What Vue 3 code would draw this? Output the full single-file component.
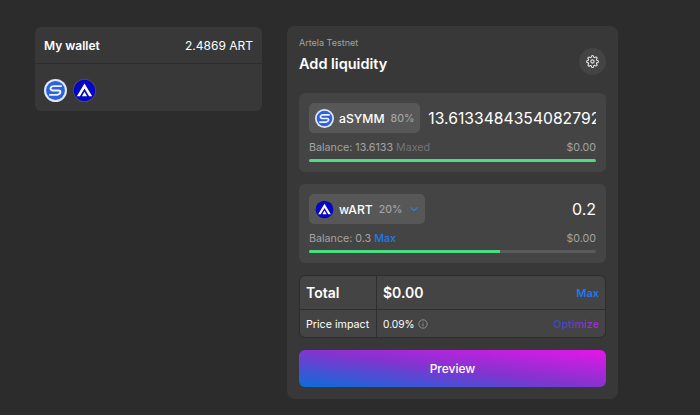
<template>
  <div class="page">
    <div class="wallet">
      <div class="wallet-head">
        <span class="wallet-title">My wallet</span>
        <span class="wallet-amount">2.4869 ART</span>
      </div>
      <div class="wallet-tokens">
        <svg class="logo-big" viewBox="0 0 24 24"><use href="#symm-logo" /></svg>
        <svg class="logo-big" viewBox="0 0 24 24"><use href="#art-logo" /></svg>
      </div>
    </div>

    <div class="card">
      <!-- logos used several times -->
      <svg width="0" height="0" class="defs">
        <defs>
          <g id="symm-logo">
            <circle cx="12" cy="12" r="12" fill="#dfe8fb" />
            <circle cx="12" cy="12" r="9.8" fill="#2c62dc" />
            <path d="M18.6 7.4H10.4Q7.6 7.4 6.9 9.2T8.8 12H15.2Q17.4 12 17.1 14T13.6 16.6H5.4" fill="none" stroke="#eef3fd" stroke-width="2" />
          </g>
          <g id="art-logo">
            <circle cx="12" cy="12" r="12" fill="#55554f" />
            <circle cx="12" cy="12" r="11.2" fill="#0505c4" />
            <path d="M12 4.6L20 18H16.8L12 10L7.2 18H4Z" fill="#fff" />
            <path d="M12 13.4L14.7 18H9.3Z" fill="#fff" />
          </g>
        </defs>
      </svg>

      <div class="card-head">
        <div>
          <div class="network">Artela Testnet</div>
          <div class="title">Add liquidity</div>
        </div>
        <button class="gear">
          <svg width="13" height="13" viewBox="0 0 24 24" fill="none" stroke="#e5e5e5" stroke-width="2" stroke-linecap="round" stroke-linejoin="round">
            <circle cx="12" cy="12" r="3" />
            <path d="M19.4 15a1.65 1.65 0 0 0 .33 1.82l.06.06a2 2 0 1 1-2.83 2.83l-.06-.06a1.65 1.65 0 0 0-2.82 1.17V21a2 2 0 1 1-4 0v-.09a1.65 1.65 0 0 0-2.82-1.12l-.06.06a2 2 0 1 1-2.83-2.83l.06-.06a1.65 1.65 0 0 0-1.17-2.82H3a2 2 0 1 1 0-4h.09a1.65 1.65 0 0 0 1.12-2.82l-.06-.06a2 2 0 1 1 2.83-2.83l.06.06a1.65 1.65 0 0 0 1.82.33H9a1.65 1.65 0 0 0 1-1.51V3a2 2 0 1 1 4 0v.09a1.65 1.65 0 0 0 2.82 1.12l.06-.06a2 2 0 1 1 2.83 2.83l-.06.06a1.65 1.65 0 0 0-.33 1.82V9a1.65 1.65 0 0 0 1.51 1H21a2 2 0 1 1 0 4h-.09a1.65 1.65 0 0 0-1.51 1z" />
          </svg>
        </button>
      </div>

      <div v-for="t in tokens" :key="t.name" class="token-box">
        <div class="token-row">
          <div class="pill">
            <svg class="logo-small" viewBox="0 0 24 24"><use :href="t.logo" /></svg>
            <span class="pill-name">{{ t.name }}</span>
            <span class="pill-pct">{{ t.pct }}</span>
            <svg v-if="t.select" class="chev" width="10" height="10" viewBox="0 0 12 12" fill="none" stroke="#2d7fe0" stroke-width="1.5"><path d="M2 4l4 4 4-4" /></svg>
          </div>
          <div class="amount" :class="{ 'amount-long': !t.select }">{{ t.amount }}</div>
        </div>
        <div class="balance-row">
          <span>Balance: {{ t.balance }} <span :class="t.select ? 'link' : 'muted'">{{ t.action }}</span></span>
          <span>$0.00</span>
        </div>
        <div class="bar"><div class="bar-fill" :style="{ width: t.fill + '%' }"></div></div>
      </div>

      <div class="summary">
        <div class="cell label big">Total</div>
        <div class="cell value big">
          <span>$0.00</span>
          <span class="link small-action">Max</span>
        </div>
        <div class="cell label">Price impact</div>
        <div class="cell value">
          <span class="impact">0.09%
            <svg width="10" height="10" viewBox="0 0 10 10" fill="none" stroke="#8f8f8f"><circle cx="5" cy="5" r="4.2" /><path d="M5 4.4V7.4M5 2.6V3.5" /></svg>
          </span>
          <span class="optimize">Optimize</span>
        </div>
      </div>

      <button class="preview">Preview</button>
    </div>
  </div>
</template>

<script setup>
const tokens = [
  { name: 'aSYMM', pct: '80%', logo: '#symm-logo', amount: '13.613348435408279299', balance: '13.6133', action: 'Maxed', fill: 100, select: false },
  { name: 'wART', pct: '20%', logo: '#art-logo', amount: '0.2', balance: '0.3', action: 'Max', fill: 66.5, select: true }
]
</script>

<style>
html, body {
  background: #2c2c2c;
}
</style>

<style scoped>
.page {
  width: 700px;
  height: 415px;
  box-sizing: border-box;
  padding: 26px 0 0 35px;
  display: flex;
  align-items: flex-start;
  gap: 25px;
  overflow: hidden;
  background: #2c2c2c;
  color: #fff;
  font-family: Inter, "Liberation Sans", sans-serif;
}

.wallet {
  width: 227px;
  margin-top: 1px;
  background: #383838;
  border-radius: 6px;
}

.wallet-head {
  height: 36px;
  padding: 0 9px;
  display: flex;
  align-items: center;
  justify-content: space-between;
  border-bottom: 1px solid #2e2e2e;
  font-size: 12px;
}

.wallet-title {
  font-weight: 600;
}

.wallet-tokens {
  height: 47px;
  box-sizing: border-box;
  padding: 15px 9px 0;
  display: flex;
  align-items: flex-start;
  gap: 6px;
}

.logo-big {
  width: 23px;
  height: 23px;
}

.logo-small {
  width: 19px;
  height: 19px;
  flex: none;
}

.card {
  width: 331px;
  height: 373px;
  box-sizing: border-box;
  padding: 12px;
  background: #383838;
  border-radius: 8px;
}

.defs {
  position: absolute;
}

.card-head {
  height: 55px;
  display: flex;
  justify-content: space-between;
  align-items: flex-start;
}

.network {
  margin-top: -1px;
  font-size: 9px;
  line-height: 11px;
  color: #a3a3a3;
}

.title {
  margin-top: 7px;
  font-size: 14.5px;
  line-height: 18px;
  font-weight: 600;
}

.gear {
  width: 27px;
  height: 27px;
  margin-top: 10px;
  padding: 0;
  border: none;
  border-radius: 50%;
  background: #444;
  display: flex;
  align-items: center;
  justify-content: center;
}

.token-box {
  height: 79px;
  box-sizing: border-box;
  margin-bottom: 12px;
  padding: 10px;
  background: #444;
  border-radius: 6px;
}

.token-row {
  height: 30px;
  display: flex;
  align-items: center;
  gap: 8px;
}

.pill {
  height: 30px;
  box-sizing: border-box;
  padding: 0 6px;
  display: flex;
  align-items: center;
  flex: none;
  background: #575757;
  border-radius: 5px;
}

.pill-name {
  margin-left: 5px;
  font-size: 12.2px;
  font-weight: 500;
}

.pill-pct {
  margin-left: 6px;
  font-size: 10.5px;
  font-weight: 500;
  color: #a3a3a3;
}

.chev {
  margin-left: 7px;
}

.amount {
  flex: 1;
  min-width: 0;
  overflow: hidden;
  white-space: nowrap;
  text-align: right;
  font-size: 16px;
}

.amount-long {
  text-align: left;
  font-size: 15.7px;
}

.balance-row {
  margin-top: 7px;
  height: 14px;
  display: flex;
  justify-content: space-between;
  align-items: center;
  font-size: 10.7px;
  color: #a3a3a3;
}

.muted {
  color: #737373;
}

.link {
  color: #2079f0;
  font-weight: 500;
}

.bar {
  margin-top: 5px;
  height: 3px;
  border-radius: 2px;
  background: #5a5a5a;
  overflow: hidden;
}

.bar-fill {
  height: 100%;
  background: #4ade80;
}

.summary {
  display: grid;
  grid-template-columns: 76px 1fr;
  grid-template-rows: 33px 28px;
  gap: 1px;
  background: #2e2e2e;
  border: 1px solid #2e2e2e;
  border-radius: 6px;
  overflow: hidden;
  height: 63px;
  box-sizing: border-box;
}

.cell {
  background: #444;
  display: flex;
  align-items: center;
  padding: 0 6px;
  font-size: 10.7px;
  white-space: nowrap;
}

.big {
  font-size: 14px;
  font-weight: 600;
}

.value {
  justify-content: space-between;
}

.small-action {
  font-size: 11px;
  font-weight: 600;
}

.impact {
  display: flex;
  align-items: center;
  gap: 3px;
  font-size: 10.2px;
}

.optimize {
  font-weight: 600;
  background: linear-gradient(90deg, #2f4fc0, #a82cd0);
  -webkit-background-clip: text;
  background-clip: text;
  color: transparent;
}

.preview {
  display: block;
  width: 100%;
  height: 37px;
  margin-top: 12px;
  border: none;
  border-radius: 6px;
  color: #fff;
  font-family: inherit;
  font-size: 12px;
  font-weight: 500;
  background: linear-gradient(to top right, #0a6ed8 0%, #8433d0 50%, #e616e8 100%);
}
</style>
